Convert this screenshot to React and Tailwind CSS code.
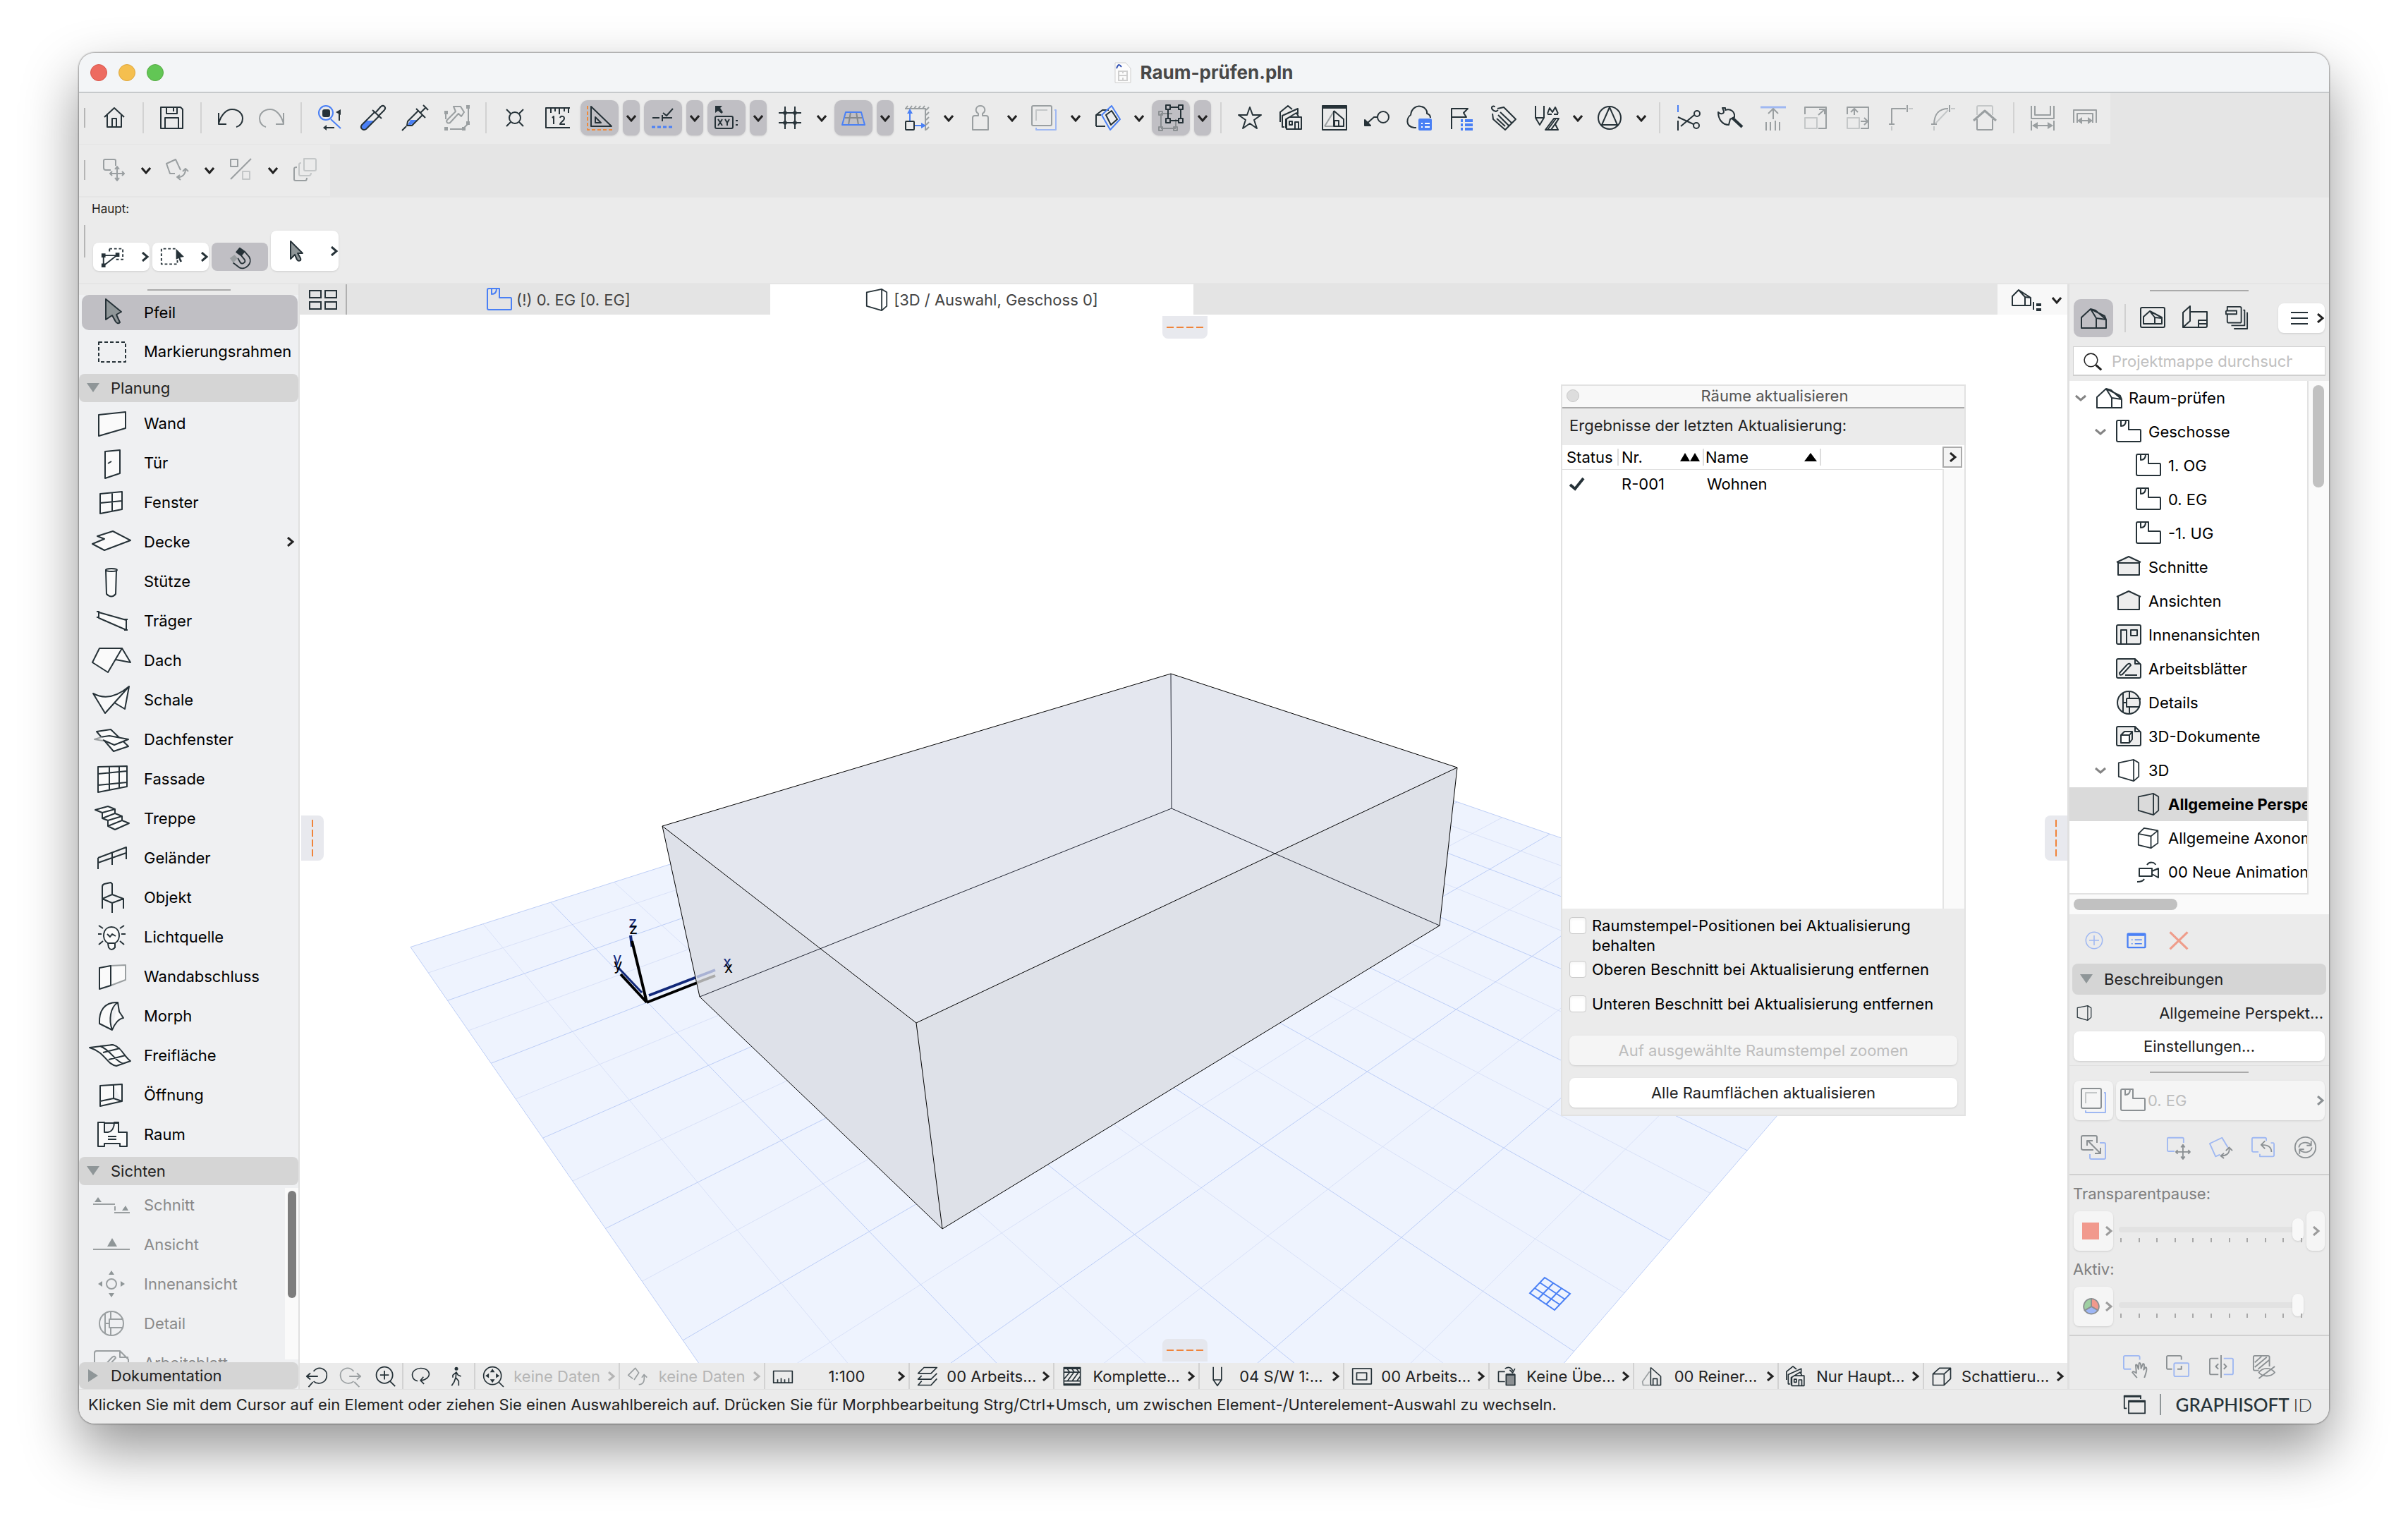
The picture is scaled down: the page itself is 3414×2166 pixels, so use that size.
import { useState } from "react";
import clsx from "clsx";

const INK = "#263238";
const GREY = "#9a9fa1";
const LIGHT = "#c4c7c8";
const BLUE = "#4a80f5";
const SKY = "#9fb8f2";

/* ------------------------------------------------------------------ icons */

// 36 x 36 drawings, stroked with currentColor unless a part says otherwise
const ICONS = {
  home: <path d="M4 17L18 4L32 17M8 14V31H28V14M15 31V19H21V31" />,
  save: (
    <path d="M4 3H30L33 6V33H2V3ZM10 2V12H25V2M20 4V9M8 33V18H27V33" />
  ),
  undo: <path d="M2 11V27H13M2 26C6 12 14 6 21 6C31 6 36 13 36 19C36 25 32 30 27 31" />,
  redo: <path d="M34 11V27H23M34 26C30 12 22 6 15 6C5 6 0 13 0 19C0 25 4 30 9 31" />,
  find: (
    <>
      <circle cx="12" cy="11" r="10" stroke={BLUE} />
      <path d="M19 20L33 33" stroke={BLUE} />
      <rect x="8" y="7" width="9" height="9" rx="2" fill="currentColor" />
      <path d="M31 10V22M12 32H24" />
      <path d="M8 32L13 28V36Z" fill="currentColor" stroke="none" />
      <path d="M26 10L33 6V14Z" fill="currentColor" stroke="none" />
    </>
  ),
  dropper: (
    <>
      <path d="M9 22L20 22L9 34C5 37 0 33 3 29Z" fill={BLUE} stroke="none" />
      <path d="M22 9L3 28C0 32 4 37 9 34L28 15M18 7L31 19M23 10L30 2C34 -1 38 3 35 7L27 15" />
    </>
  ),
  syringe: (
    <>
      <path d="M12 21H21L12 29L7 30Z" fill={BLUE} stroke="none" />
      <path d="M0 36L6 30M7 29L8 23L23 8L29 14L14 29ZM20 5L33 18M26 11L34 3M30 0L37 7" />
    </>
  ),
  marker: (
    <>
      <path d="M13 2H23L28 10L24 16L20 12L8 25C4 27 2 23 4 21L16 9ZM34 5V24M2 12V20M8 34H26M28 32L34 26" />
      <g fill="currentColor" stroke="none">
        <rect x="0" y="8" width="5" height="5" /><rect x="31" y="0" width="5" height="5" />
        <rect x="31" y="23" width="5" height="5" /><rect x="0" y="31" width="5" height="5" />
        <rect x="25" y="31" width="5" height="5" />
      </g>
    </>
  ),
  snap: <><circle cx="18" cy="18" r="8" /><path d="M6 6L12 12M30 6L24 12M6 30L12 24M30 30L24 24" /></>,
  ruler: (
    <>
      <path d="M36 4H2V32H36M9 5V11M15 5V9M21 5V13M28 5V9M34 5V11" />
      <path d="M11 18L13 16V27M22 18C23 15 28 15 28 19C28 22 23 24 22 27H29" />
    </>
  ),
  setsquare: (
    <>
      <path d="M6 2V30H35ZM12 17V25H20Z" />
      <path d="M1 1V35H36" stroke="#ef8a3c" strokeDasharray="5 3" />
    </>
  ),
  guide: (
    <>
      <path d="M3 18H13M17 18H31M17 14V23M18 11L23 15L32 5" />
      <path d="M2 31H33" stroke={BLUE} strokeWidth="3" strokeDasharray="5 3" />
    </>
  ),
  coords: (
    <>
      <path d="M2 1H12L9 4L13 10L11 12L6 8L2 11Z" fill="currentColor" stroke="none" />
      <rect x="2" y="16" width="25" height="17" rx="2" />
      <path d="M6 20L12 29M12 20L6 29M16 20L19 25L22 20M19 25V29M31 22H34M31 28H34" />
    </>
  ),
  grid: (
    <>
      <path d="M11 2V8M11 14V22M11 28V34M25 2V8M25 14V22M25 28V34M2 11H8M14 11H22M28 11H34M2 25H8M14 25H22M28 25H34" />
      <path d="M11 8V14M8 11H14M25 8V14M22 11H28M11 22V28M8 25H14M25 22V28M22 25H28" strokeWidth="3" />
    </>
  ),
  plane: (
    <>
      <path d="M14 10L11 28M22 10L25 28M6 18H30" stroke="#85898c" />
      <path d="M7 10H29L34 28H2Z" stroke={BLUE} />
    </>
  ),
  walls: (
    <>
      <path d="M1 5H30V36M2 5L5 1M8 5L11 1M14 5L17 1M20 5L23 1M26 5L29 1M31 7L35 3M31 14L35 10M31 21L35 17M31 28L35 24M31 35L35 31" stroke={GREY} />
      <path d="M8 22V8M15 29H27" stroke={BLUE} />
      <path d="M8 5L4 12H12ZM31 29L24 25V33Z" fill={BLUE} stroke="none" />
      <rect x="2" y="23" width="12" height="12" rx="1" />
    </>
  ),
  person: <path d="M15 15V12C9 8 12 1 18 1C24 1 27 8 21 12V15H26Q29 15 29 18V35H7V18Q7 15 10 15Z" />,
  sheets: (
    <>
      <rect x="1" y="1" width="28" height="28" rx="2" />
      <path d="M7 22V7H23" stroke={LIGHT} />
      <path d="M33 7H35V35H7V32" stroke={SKY} />
    </>
  ),
  cutplane: (
    <>
      <path d="M2 30V14L11 7H20M2 14H9M2 30H15M16 14L24 8L32 20L23 28Z" />
      <path d="M24 1L36 20L22 35L10 14Z" stroke={BLUE} />
    </>
  ),
  nodes: (
    <>
      <g stroke="#8b8f92">
        <path d="M4 12V31M4 33H25M25 20V31M4 12H20" />
        <rect x="1" y="9" width="5" height="5" /><rect x="1" y="31" width="5" height="5" /><rect x="22" y="31" width="5" height="5" />
      </g>
      <path d="M14 4V22M32 4V22M14 3H32M14 22H32" />
      <g fill="#c0bfc4">
        <rect x="11" y="0" width="6" height="6" /><rect x="29" y="0" width="6" height="6" />
        <rect x="11" y="19" width="6" height="6" /><rect x="29" y="19" width="6" height="6" />
      </g>
    </>
  ),
  star: <path d="M18 3L22 14H34L24 21L28 33L18 26L8 33L12 21L2 14H14Z" />,
  stories: <path d="M7 31H4V15L26 5V13M1 24V10L12 1L18 6M9 33V20L24 11L27 16M10 20L14 17H31V34H10ZM14 23H18V28H14ZM22 33V24H27V33" />,
  viewhouse: (
    <>
      <path d="M4 30L17 9" stroke={GREY} />
      <rect x="1" y="1" width="34" height="34" /><path d="M1 3H35" strokeWidth="4" />
      <path d="M17 8V30H31V20L17 8M18 30V22H24V30" />
      <path d="M4 30H16" stroke={GREY} />
    </>
  ),
  connector: (
    <>
      <circle cx="27" cy="17" r="8" /><path d="M19 17H14L4 26" />
      <path d="M1 29V21L9 29Z" fill="currentColor" />
    </>
  ),
  cloud: (
    <>
      <path d="M14 32H11C-3 30 1 17 6 14C7 5 14 0 21 2C27 3 30 9 29 12C33 13 34 16 34 18" />
      <rect x="17" y="19" width="19" height="17" rx="2" fill={BLUE} stroke="none" />
      <path d="M21 26H23M21 31H23M26 26H33M26 31H33" stroke="#fff" />
    </>
  ),
  flags: (
    <>
      <path d="M4 34V5H27L21 11L25 17H4" />
      <path d="M17 22H20M17 28H20M17 34H20M23 22H34M23 28H34M23 34H34" stroke={BLUE} strokeWidth="4" />
    </>
  ),
  tag: <path d="M10 7L7 9C4 8 0 7 1 3C2 1 5 1 5 3M9 5L18 3L35 20L20 35L3 20L2 12M13 10L30 26M10 14L25 29M8 19L20 30" />,
  pens: (
    <>
      <path d="M3 1V18H15V1M3 18L9 28L15 18M20 12L23 4L27 10L31 3L35 12M20 13H26M29 13H35" />
      <path d="M17 35L29 19H36L31 27L35 35ZM20 35L32 19M25 35L34 22" />
    </>
  ),
  compass: <><circle cx="18" cy="18" r="16" /><path d="M18 3L7 28H29Z" /></>,
  scissors: (
    <>
      <path d="M3 0V10" stroke={BLUE} />
      <path d="M3 22V36M3 17L25 27M7 30L26 14" />
      <circle cx="30" cy="12" r="4" /><circle cx="29" cy="29" r="4" />
    </>
  ),
  axe: <><path d="M0 10C4 14 8 12 8 9L6 4H10V7C18 4 24 10 23 17L17 20L15 28C6 28 0 20 0 10Z" /><path d="M20 18L34 31" strokeWidth="4" /></>,
  lift: <><path d="M0 3H36" stroke={SKY} strokeWidth="3" /><path d="M18 20V5M11 12L18 5L25 12M8 24V36M14 24V36M21 22V36M27 24V36" /></>,
  resize: <><path d="M3 13V3H33V33H22M22 14L31 6M23 6H31V13" /><path d="M3 18H20V33H3Z" stroke={LIGHT} /></>,
  stretch: <><path d="M3 13V3H33V33H22M13 14V6M8 10L13 5L18 10M22 23H32M27 18L32 23L27 28" /><path d="M3 18H20V33H3Z" stroke={LIGHT} /></>,
  corner: <><path d="M6 28V5H26M28 0V10M2 27H10" /><path d="M6 30V36M30 5H36" stroke={LIGHT} /></>,
  arc: <><path d="M6 28C6 12 14 5 26 5M28 0V10M2 27H10" /><path d="M6 30V36M30 5H36M8 26L26 7" stroke={LIGHT} /></>,
  roofup: <><path d="M7 14V3Q7 1 9 1H27Q29 1 29 3V14" stroke={LIGHT} /><path d="M7 20V34Q7 35 9 35H27Q29 35 29 34V20" /><path d="M2 22L18 8L34 22" strokeWidth="3" /></>,
  channel: <><path d="M2 1V19H34V1M7 1V14H29V1M2 22V36M34 22V36M4 29H32" /><path d="M3 29L11 24V34ZM33 29L25 24V34Z" fill="currentColor" stroke="none" /></>,
  bracket: <><path d="M2 25V7H34V25M7 25V12H29V25M9 22H27" /><path d="M7 22L14 17V27ZM29 22L22 17V27Z" fill="currentColor" stroke="none" /></>,
  move: <path d="M13 18H6Q3 18 3 15V5Q3 3 5 3H18Q20 3 20 5V12M22 14V32M12 23H32M19 17L22 13L25 17M19 29L22 33L25 29M15 20L12 23L15 26M29 20L32 23L29 26" />,
  rotate: <path d="M14 23H7L2 9L15 3L22 18M18 28C24 29 29 24 29 17M25 20L29 16L33 20M21 25L17 28L22 32" />,
  ratio: <><path d="M3 3H13V13H3ZM32 2L3 31" /><path d="M20 20H30V31H20Z" stroke={LIGHT} /></>,
  copies: <><path d="M7 14Q3 14 3 16V31Q3 33 5 33H19Q21 33 21 29" /><path d="M13 8Q10 8 10 10V24Q10 26 12 26H24Q27 26 27 22M17 2H32Q34 2 34 4V17Q34 19 32 19H19Q17 19 17 17Z" stroke={LIGHT} /></>,
  marquee: (
    <>
      <path d="M14 6H34V22H24M14 6V12" strokeDasharray="4 3" />
      <path d="M5 16H26M5 18V31M7 30L26 15" />
      <path d="M2 13H8V19H2ZM2 28H8V34H2ZM23 12H29V18H23Z" fill="currentColor" stroke="none" />
    </>
  ),
  select: <><path d="M24 6H3V29H27V22" strokeDasharray="4 3" /><path d="M25 6L37 18L31 19L34 25L31 26L29 20L25 22Z" fill="currentColor" stroke="none" /></>,
  magnet: (
    <>
      <path d="M25 10L32 18C38 28 26 39 17 34L8 27M20 16L25 22C28 26 22 30 19 27L15 20" />
      <path d="M13 11L18 5L25 10L20 16Z" fill="currentColor" />
      <path d="M3 20L10 15L15 20L8 27Z" fill={GREY} stroke="none" />
    </>
  ),
  arrow: <path d="M12 4V29L18 23L21 30Q23 33 26 31Q27 29 25 26L22 21H29Z" fill="#8f9698" />,
  file3d: <path d="M2 6L26 1V35L2 28ZM26 1L34 6V28L26 35" />,
  plan: <path d="M3 2H18V15H34Q35 15 35 17V31Q35 32 33 32H3Q1 32 1 30V4Q1 2 3 2ZM7 2V10C12 10 14 7 14 2" />,
  house: <path d="M1 32V17L14 5L34 15L36 20V32ZM14 5L22 18V32M22 18L36 20M14 5L21 7L36 20" />,
  houselist: <><path d="M1 26V13L10 4L27 15V26ZM10 4L19 14V26M19 14L27 15" /><path d="M31 21V32" /><path d="M35 25H42M35 32H42" strokeWidth="4" /></>,
  viewmap: <><rect x="1" y="3" width="34" height="28" rx="2" /><path d="M5 26V16L14 8L31 17V26ZM14 8L21 17V26M21 17L31 18" /></>,
  layout: <path d="M1 31V10L11 1V22L1 31H33Q35 31 35 29V9H12M23 31V21H35M23 26H35" />,
  publisher: <path d="M4 7V2H23Q25 2 25 4V24Q25 26 23 26H7Q4 26 4 24V12M2 8H18V13H2V8M28 7H30V30H10M33 11H34V35H14" />,
  schnitt: <path d="M1 11L18 3L35 11M3 12V29H33V12ZM3 12H33" fill="#ededed" />,
  ansicht: <path d="M1 12L18 4L35 12M3 12V30H33V12" fill="#ededed" />,
  innen: <><rect x="1" y="4" width="34" height="27" rx="2" fill="#ededed" /><path d="M7 31V11H15V31M21 11H30V19H21Z" /></>,
  blatt: <path d="M27 4H3Q1 4 1 6V29Q1 31 3 31H33Q35 31 35 29V12L27 4V11H35M5 24L16 12Q20 9 21 13L9 26Q5 28 5 24ZM13 27H30" fill="#ededed" />,
  detail: <><circle cx="18" cy="18" r="16" fill="#ededed" /><path d="M10 4V32M19 2V12M19 24V34M15 12H34V14M34 24H15V12M10 18H15" /></>,
  doc3d: <path d="M27 4H3Q1 4 1 6V29Q1 31 3 31H33Q35 31 35 29V12L27 4V11H35M7 16H19V27H7ZM7 16L12 11H23L19 16M19 27L23 22V11" fill="#ededed" />,
  axono: <path d="M2 11L22 15V34L2 29ZM2 11L11 2L33 6L22 15M33 6V26L22 34" />,
  camera: <path d="M5 13H23V24H5ZM23 17L32 13V26L23 21M16 8C19 3 27 4 28 8M2 32C8 32 11 30 12 28" />,
  search: <><circle cx="16" cy="16" r="12" /><path d="M25 25L35 34" strokeWidth="4" /></>,
  add: <><circle cx="18" cy="18" r="15" /><path d="M18 9V27M9 18H27" /></>,
  props: <><rect x="2" y="6" width="32" height="25" rx="1" strokeWidth="3" /><path d="M3 8H33" strokeWidth="4" /><path d="M9 17H11M9 24H11M15 17H28M15 24H28" /></>,
  cross: <path d="M2 3L34 34M34 3L2 34" strokeWidth="4" />,
  swap: <><path d="M18 22H4Q1 22 1 20V4Q1 2 3 2H21Q23 2 23 4V12M10 9L27 26M9 16V9H17M28 19V27H20" /><path d="M27 12H33Q35 12 35 14V33Q35 35 33 35H15Q13 35 13 33V28" stroke={SKY} /></>,
  tmove: <><path d="M12 24H3Q1 24 1 22V4Q1 3 3 3H24Q26 3 26 5V11" stroke={SKY} /><path d="M25 15V35M14 25H36M22 18L25 14L28 18M22 32L25 36L28 32M17 22L14 25L17 28M33 22L36 25L33 28" /></>,
  trotate: <><path d="M17 29L10 32L1 12L20 3L29 18" stroke={SKY} /><path d="M19 31C27 31 32 27 31 20M26 23L31 18L36 23M23 27L18 31L23 35" /></>,
  treset: <><path d="M11 25H3Q1 25 1 23V5Q1 3 3 3H21Q23 3 23 5V8M30 11H34Q35 11 35 13V30Q35 32 33 32H13V28" stroke={SKY} /><path d="M31 25C31 18 26 14 16 14M21 8L15 14L21 20" /></>,
  refresh: <><circle cx="18" cy="18" r="16" /><path d="M8 18C9 10 20 8 27 14M27 8V15H20M28 18C27 26 16 28 9 22M9 28V21H16" /></>,
  hand: <><path d="M12 22H3Q1 22 1 20V4Q1 2 3 2H23Q25 2 25 4V8" stroke={SKY} /><path d="M21 35L14 27Q15 24 20 28L19 16Q21 13 23 22L24 13Q27 11 27 21L30 14Q33 13 31 23L34 19Q37 20 34 29L32 35" /></>,
  overlap: <><path d="M9 22H3Q1 22 1 20V4Q1 2 3 2H21Q23 2 23 4V8M23 17V22H17" /><rect x="12" y="13" width="22" height="20" rx="2" stroke={SKY} /></>,
  mirror: <><path d="M14 6H3Q1 6 1 8V28Q1 30 3 30H14M18 1V35M14 14L10 18L14 22M22 14L26 18L22 22" /><path d="M22 6H34Q36 6 36 8V28Q36 30 34 30H22" stroke={SKY} /></>,
  hatch: <path d="M26 18V4Q26 2 24 2H4Q2 2 2 4V22Q2 24 4 24H10M4 12L14 3M4 19L22 4M9 22L26 8M10 27C16 19 28 19 34 27C28 34 16 34 10 27ZM34 18L10 36" />,
  windows: <><path d="M6 24H2V4H28V9M9 12H35V32H9Z" /><path d="M1 5H29M9 13H35" strokeWidth="3" /></>,
  zoomback: <><path d="M13 10C22 0 36 7 34 18C33 29 20 32 13 26M12 27L5 35" /><path d="M20 18H2M8 13L2 18L8 23" /></>,
  zoomnext: <><path d="M23 10C14 0 0 7 2 18C3 29 16 32 23 26M24 27L32 35" /><path d="M16 18H34M28 13L34 18L28 23" /></>,
  zoomin: <><circle cx="17" cy="16" r="13" /><path d="M26 26L34 34M17 9V23M10 16H24" /></>,
  orbit: <path d="M12 26C2 24 0 12 8 7C15 2 28 4 31 11C34 18 27 24 18 25M22 19L17 25L23 31" />,
  walk: <><circle cx="18" cy="5" r="3" fill="currentColor" stroke="none" /><path d="M18 10L17 20L22 26V34M17 20L14 28L10 34M18 11L12 16V20M18 11L21 16L26 18" /></>,
  zoomfit: (
    <>
      <circle cx="17" cy="17" r="15" /><path d="M28 28L36 36" />
      <path d="M17 5L21 11H13ZM17 29L13 23H21ZM5 17L11 13V21ZM29 17L23 21V13Z" fill="currentColor" stroke="none" />
    </>
  ),
  angle: <path d="M10 22L2 16L14 4L20 12L12 24M20 32C28 32 30 26 29 16M25 20L29 15L34 20" />,
  scale: <path d="M2 9H34V29H2ZM9 29V23M15 29V21M21 29V23M28 29V21" />,
  layers: <path d="M12 3H34L24 13H2ZM8 17L2 23H24L34 13M8 26L2 33H24L34 22" />,
  pattern: <path d="M4 3H32V33H4ZM4 5H32M4 11H32M4 26H32M4 31H32M4 23L14 11M10 26L21 11M18 26L29 11M26 26L32 18M8 3L14 11M16 3L22 11M24 3L30 11" />,
  pen: <path d="M11 2V24L18 34L25 24V2M11 24H25" />,
  frame: <><rect x="2" y="5" width="32" height="26" /><rect x="9" y="12" width="17" height="12" /></>,
  override: <><path d="M14 27H3V10H14M14 5C20 1 26 3 27 9M22 7L27 12L31 5" /><rect x="16" y="15" width="15" height="18" fill="#8b8f92" /><path d="M16 15H31" strokeWidth="3" /></>,
  reno: <><path d="M14 33H3L2 27L14 10" stroke={GREY} /><path d="M16 3V33H33V18L16 3M20 33V22H27V33" /></>,
  cube: <path d="M3 14H22V33H3ZM3 14L14 4H33L22 14M22 33L33 22V4" />,
};

// 60 x 40 drawings for the toolbox
const TOOLS = {
  Pfeil: <path d="M22 2V31L31 25L36 34Q39 38 42 35L37 24L44 20Z" fill="#8f9698" transform="translate(0 -1)" />,
  Markierungsrahmen: <path d="M12 7H50V35H12Z" fill="none" strokeDasharray="5 3" />,
  Wand: <path d="M12 8L50 4V27L12 38Z" />,
  Tür: <path d="M21 4L42 2V35L21 42ZM25 21L30 18" />,
  Fenster: <path d="M14 8L45 5V30L14 36ZM31 6V33M14 21L45 18" />,
  Decke: <path d="M3 23L20 32L57 18L32 5L10 12L20 16Z" />,
  Stütze: <><path d="M22 4L23 38Q30 45 36 38L37 4Z" /><ellipse cx="30" cy="4" rx="8" ry="2" /></>,
  Träger: <path d="M12 8L51 19V33L12 16ZM9 7H13M9 15H13M48 18H53M48 33H53" />,
  Dach: <path d="M3 23L13 3H45L25 37ZM45 3L57 23L36 19" />,
  Schale: <path d="M4 11Q28 24 55 1L21 39ZM55 1L49 33L34 24" />,
  Dachfenster: <><path d="M9 9L29 6L54 30L33 37Z" /><path d="M14 17L27 15L54 20L34 28L18 21" /><path d="M16 17L6 20L18 22" stroke={GREY} /></>,
  Fassade: <path d="M11 3L52 2V31L11 39ZM27 3V36M41 2V33M11 13L52 9M11 29L52 25" />,
  Treppe: <path d="M7 8L25 3L35 7V13L45 17V23L55 27L35 36L25 31V23L17 20V12ZM17 12L35 7M17 20L35 13M25 23L45 17M25 31L45 23" />,
  Geländer: <path d="M11 20L51 5V22M11 20V36M31 12V30M11 27L51 13" fill="none" />,
  Objekt: <path d="M17 36V5Q17 2 20 1L29 -1L31 1V16L17 22L31 28L47 22L31 16M31 28V42M47 22V36" fill="none" />,
  Lichtquelle: <path d="M25 29C15 23 18 6 30 6C42 6 45 23 35 29V35Q30 41 26 35ZM25 29H35M24 16L28 20L31 16L36 19M12 4L18 8M48 4L42 8M11 16H16M44 16H50M12 31L18 26M48 31L42 26" />,
  Wandabschluss: <><path d="M29 5L50 4V25L29 33" stroke={GREY} /><path d="M13 8L29 5V33L13 38Z" /></>,
  Morph: <path d="M13 31C12 13 20 0 39 1L41 14L47 23C40 24 34 32 31 40ZM39 1C28 8 26 26 31 40" />,
  Freifläche: <path d="M-1 9L32 5C44 8 48 22 57 28L37 35C22 32 22 16 -1 9ZM14 7C30 13 34 28 47 32M18 16L42 10M26 26L50 20M32 5C24 6 22 6 14 7" />,
  Öffnung: <path d="M14 7L45 5V29L14 36ZM33 6V25L45 29M14 29L33 25" />,
  Raum: <path d="M13 3H20V17H25C31 16 34 10 34 3H40V17H52V37H42V33H20V37H11V3ZM20 4H40M25 23H37M25 27H37" />,
  Schnitt: <><path d="M4 19H35M34 31H56M35 22V28" /><path d="M6 16L11 9L16 16ZM45 28L50 21L54 28Z" fill="currentColor" stroke="none" /></>,
  Ansicht: <><path d="M4 27H56" /><path d="M24 23L31 11L38 23Z" fill="currentColor" stroke="none" /></>,
  Innenansicht: <><circle cx="30" cy="20" r="7" /><path d="M26 7H34L30 1ZM26 33H34L30 39ZM17 16V24L11 20ZM43 16V24L49 20Z" fill="currentColor" stroke="none" /></>,
  Detail: <><circle cx="30" cy="20" r="17" /><path d="M21 5V35M29 3V14M29 26V37M47 14H27V26H47M21 20H27" /></>,
  Arbeitsblatt: <path d="M42 3H9Q6 3 6 6V34H54V15L42 3V12H54M20 24L31 12Q35 9 36 13L24 26" />,
};

function Icon({ name, size = "size-9", className = "" }) {
  return (
    <svg viewBox="0 0 36 36" fill="none" stroke="currentColor" strokeWidth="2" strokeLinejoin="round" className={clsx("shrink-0 overflow-visible", size, className)} aria-hidden="true">
      {ICONS[name]}
    </svg>
  );
}

function Chevron({ dir = "right", className = "" }) {
  return (
    <svg viewBox="0 0 14 14" fill="none" stroke="currentColor" strokeWidth="3" className={clsx("size-[14px] shrink-0", className)} aria-hidden="true">
      <path d={dir === "right" ? "M4 1L11 7L4 13" : "M1 4L7 11L13 4"} />
    </svg>
  );
}

/* ---------------------------------------------------------------- toolbars */

// [icon, flags]: a = active, m = has menu, d = disabled; "|" is a divider
const MAIN_TOOLBAR = [
  ["home"], "|", ["save"], "|", ["undo"], ["redo", "d"], "|",
  ["find"], ["dropper"], ["syringe"], ["marker", "d"], "|",
  ["snap"], ["ruler"], ["setsquare", "am"], ["guide", "am"], ["coords", "am"],
  ["grid", "m"], ["plane", "am"], ["walls", "m"], ["person", "dm"], ["sheets", "dm"],
  ["cutplane", "m"], ["nodes", "am"], "|",
  ["star"], ["stories"], ["viewhouse"], ["connector"], ["cloud"], ["flags"], ["tag"],
  ["pens", "m"], ["compass", "m"], "|",
  ["scissors"], ["axe"], ["lift", "d"], ["resize", "d"], ["stretch", "d"],
  ["corner", "d"], ["arc", "d"], ["roofup", "d"], "|", ["channel", "d"], ["bracket", "d"],
];

const EDIT_TOOLBAR = [["move", "dm"], ["rotate", "dm"], ["ratio", "dm"], ["copies", "d"]];

function Toolbar({ items }) {
  return (
    <div className="flex h-full items-center bg-[#ebebeb] pr-1.5 pb-0.5">
      <div className="flex w-5 justify-center">
        <div className="mr-1 h-7 w-0.5 bg-[#b5b5b5]" />
      </div>
      {items.map((item, i) => {
        if (item === "|") {
          return (
            <div key={i} className="flex w-[22px] justify-center">
              <div className="h-11 w-0.5 bg-[#d2d2d2]" />
            </div>
          );
        }
        const [name, flags = ""] = item;
        const active = flags.includes("a");
        return (
          <div key={i} className="flex">
            <button
              type="button"
              aria-label={name}
              className={clsx(
                "mx-[3px] flex h-[50px] w-[54px] items-center justify-center rounded-[10px]",
                active && "bg-[#c0bfc4] shadow-sm",
                flags.includes("d") ? "text-[#9a9fa1]" : "text-[#263238]"
              )}
            >
              <Icon name={name} />
            </button>
            {flags.includes("m") && (
              <button
                type="button"
                aria-label={`${name} menu`}
                className={clsx("mx-[3px] flex h-[50px] w-6 items-center justify-center rounded-lg text-[#222]", active && "bg-[#c0bfc4] shadow-sm")}
              >
                <Chevron dir="down" />
              </button>
            )}
          </div>
        );
      })}
    </div>
  );
}

function InfoBox() {
  return (
    <div className="flex h-[121px] flex-col bg-[#ebebeb] text-[#222]">
      <div className="pt-1 pl-[18px] text-[17px] leading-6">Haupt:</div>
      <div className="flex items-start pt-[19px]">
        <div className="mr-[11px] ml-[7px] -mt-2 h-[46px] w-0.5 bg-[#b5b5b5]" />
        <div className="flex items-end gap-1">
          {["marquee", "select"].map((name) => (
            <button key={name} type="button" aria-label={name} className="flex h-10 w-20 items-center justify-between rounded-lg bg-white pl-2.5 text-[#263238] shadow">
              <Icon name={name} size="size-[34px]" />
              <Chevron />
            </button>
          ))}
          <button type="button" aria-label="magnet" className="flex h-10 w-20 items-center justify-center rounded-lg bg-[#c0bfc4] text-[#263238]">
            <Icon name="magnet" size="size-[34px]" />
          </button>
          <button type="button" aria-label="arrow" className="flex h-[57px] w-24 items-center justify-between rounded-lg bg-white pl-4 text-[#263238] shadow">
            <Icon name="arrow" />
            <Chevron />
          </button>
        </div>
      </div>
    </div>
  );
}

/* ----------------------------------------------------------------- toolbox */

const PLANUNG = [
  "Wand", "Tür", "Fenster", "Decke", "Stütze", "Träger", "Dach", "Schale", "Dachfenster", "Fassade",
  "Treppe", "Geländer", "Objekt", "Lichtquelle", "Wandabschluss", "Morph", "Freifläche", "Öffnung", "Raum",
];
const SICHTEN = ["Schnitt", "Ansicht", "Innenansicht", "Detail", "Arbeitsblatt"];

function Tool({ name, active, muted, onClick }) {
  return (
    <button
      type="button"
      onClick={onClick}
      className={clsx(
        "flex w-full shrink-0 items-center text-left",
        active ? "mb-0.5 h-[50px] rounded-[10px] bg-[#c0bfc4]" : "h-14",
        muted ? "text-[#8a8a8a]" : "text-black"
      )}
    >
      <svg
        viewBox="0 0 60 40"
        fill={muted ? "none" : "#fafafa"}
        stroke={muted ? GREY : INK}
        strokeWidth="2"
        strokeLinejoin="round"
        className={clsx("mr-4 ml-3 h-10 w-[60px] shrink-0 overflow-visible", muted && "text-[#8f9698]")}
        aria-hidden="true"
      >
        {TOOLS[name]}
      </svg>
      <span className="flex-1">{name}</span>
      {name === "Decke" && <Chevron className="mr-1 text-[#222]" />}
    </button>
  );
}

function Section({ title, open = true, className = "" }) {
  return (
    <button type="button" className={clsx("flex shrink-0 items-center gap-4 rounded-lg bg-[#d5d5d5] pl-[11px] text-left text-[#222]", className)}>
      <svg viewBox="0 0 18 18" className="size-[18px]" aria-hidden="true">
        <path d={open ? "M0 2H18L9 15Z" : "M2 0L16 9L2 18Z"} fill="#8f9698" />
      </svg>
      {title}
    </button>
  );
}

function Toolbox() {
  const [tool, setTool] = useState("Pfeil");
  return (
    <nav className="flex w-[313px] shrink-0 flex-col border-r-2 border-[#e0e0e0] bg-[#eff0f2]">
      <div className="flex h-[15px] shrink-0 items-center justify-center bg-[#ebebeb]">
        <div className="h-0.5 w-[118px] bg-[#aaa]" />
      </div>
      <div className="pr-px pl-1">
        <Tool name="Pfeil" active={tool === "Pfeil"} onClick={() => setTool("Pfeil")} />
        <Tool name="Markierungsrahmen" onClick={() => setTool("Markierungsrahmen")} />
      </div>
      <Section title="Planung" className="mt-1 h-10" />
      <div className="pt-0.5 pr-px pl-1">
        {PLANUNG.map((name) => (
          <Tool key={name} name={name} onClick={() => setTool(name)} />
        ))}
      </div>
      <Section title="Sichten" className="mt-1 h-10" />
      <div className="flex min-h-0 flex-1">
        <div className="min-w-0 flex-1 overflow-hidden px-1">
          {SICHTEN.map((name) => (
            <Tool key={name} name={name} muted />
          ))}
        </div>
        <div className="my-1 w-[19px] bg-[#fafafa] pt-1 pl-1">
          <div className="h-[152px] w-3 rounded-full bg-[#7d7d7d]" />
        </div>
      </div>
      <Section title="Dokumentation" open={false} className="h-[38px]" />
    </nav>
  );
}

/* ------------------------------------------------------------------ canvas */

// Ground plane to screen: 16 x 16 cells seen in perspective
function project(u, v) {
  const d = 1 + 0.03606 * u - 0.03705 * v;
  return [(582 + 127.6 * u + 2.75 * v) / d, (1342.5 + 14.4 * u - 14.65 * v) / d];
}

function segment(a, b) {
  return `M${project(...a).join(" ")}L${project(...b).join(" ")}`;
}

function gridPath(odd) {
  const parts = [];
  for (let i = odd ? 1 : 0; i <= 16; i += 2) {
    parts.push(segment([i, 0], [i, 16]), segment([0, i], [16, i]));
  }
  return parts.join("");
}

function Scene() {
  const corners = [[0, 0], [16, 0], [16, 16], [0, 16]];
  return (
    <svg viewBox="425 446 2506 1486" preserveAspectRatio="xMidYMid slice" className="block h-full w-full" role="img" aria-label="3D">
      <polygon points={corners.map(([u, v]) => project(u, v).join(",")).join(" ")} fill="#eef3fe" />
      <path d={gridPath(true)} stroke="#d9e1f8" strokeWidth="1" />
      <path d={gridPath(false)} stroke="#bccdf6" strokeWidth="1" />

      <g stroke="#12297a" strokeWidth="4" fill="none">
        <path d="M920 1411L1014 1375M896 1342L894 1326" />
        <path d="M910 1407L876 1371" strokeWidth="3" />
        <path d="M917 1421L1014 1383M917 1421L880 1381M917 1421L896 1334" stroke="#000" />
      </g>
      <polygon points="939,1171 1299,1450 1336,1742 992,1413" fill="#dee1e9" />
      <polygon points="1299,1450 2066,1088 2041,1312 1336,1742" fill="#dee1e8" />
      <polygon points="939,1171 1660,955 2066,1088 1299,1450" fill="#e4e7ef" />
      <g stroke="#222633" strokeWidth="1" fill="none">
        <path d="M992 1413L1661 1146L2041 1312M1661 1146L1660 955" />
        <path d="M939 1171L1660 955L2066 1088L1299 1450ZM939 1171L992 1413L1336 1742L2041 1312L2066 1088M1299 1450L1336 1742" stroke="#000" />
      </g>
      <path d="M988 1385L1014 1375" stroke="#a9b2d4" strokeWidth="4" />
      <path d="M988 1393L1014 1383" stroke="#aaa" strokeWidth="4" />

      <g fontSize="22" fontFamily="Inter, sans-serif" fill="#12297a">
        <text x="891" y="1315">z</text>
        <text x="869" y="1366">y</text>
        <text x="1025" y="1371">x</text>
        <g fill="#000">
          <text x="892" y="1324">z</text>
          <text x="870" y="1375">y</text>
          <text x="1027" y="1379">x</text>
        </g>
      </g>

      <path
        d="M2190 1811L2226 1834L2204 1857L2169 1833ZM2183 1818L2219 1842M2176 1826L2211 1849M2202 1819L2181 1841M2214 1826L2192 1849"
        stroke={BLUE} strokeWidth="2" fill="none"
      />
    </svg>
  );
}

function PaneHandle({ vertical, className }) {
  return (
    <div className={clsx("absolute flex items-center justify-center gap-1 bg-[#e2e4ea]/80", vertical ? "h-16 w-8 flex-col" : "h-8 w-16", className)}>
      {[0, 1, 2, 3].map((i) => (
        <span key={i} className={clsx("bg-[#f0843a]", vertical ? "h-2.5 w-0.5" : "h-0.5 w-2.5")} />
      ))}
    </div>
  );
}

/* ------------------------------------------------------------ room palette */

const CHECKS = [
  "Raumstempel-Positionen bei Aktualisierung behalten",
  "Oberen Beschnitt bei Aktualisierung entfernen",
  "Unteren Beschnitt bei Aktualisierung entfernen",
];

function SortMark({ wide }) {
  return (
    <svg viewBox="0 0 18 12" preserveAspectRatio="none" className={clsx("h-3", wide ? "w-[18px]" : "w-[14px]")} aria-hidden="true">
      <path d="M0 12L9 0L18 12Z" />
    </svg>
  );
}

function RoomPalette() {
  return (
    <section className="absolute top-[99px] right-[144px] flex h-[1037px] w-[574px] flex-col border-2 border-[#e2e2e2] bg-[#ebebeb]">
      <header className="relative flex h-8 shrink-0 items-center justify-center border-b-2 border-[#aaa] bg-[#f8f8f8] pb-0.5 pl-8 text-[#555]">
        <button type="button" aria-label="Schließen" className="absolute left-1.5 size-[18px] rounded-full border border-[#c8c8c8] bg-[#ddd]" />
        Räume aktualisieren
      </header>
      <p className="flex h-[52px] shrink-0 items-center pb-1 pl-2.5 text-[#222]">Ergebnisse der letzten Aktualisierung:</p>
      <div className="flex min-h-0 flex-1 bg-white">
        <div className="min-w-0 flex-1">
          <table className="w-full table-fixed border-collapse text-left text-black">
            <thead>
              <tr className="h-[34px] border-b border-[#e0e0e0]">
                <th className="w-[78px] pl-1.5 font-normal">Status</th>
                <th className="w-[121px] font-normal">
                  <div className="flex items-center justify-between border-l-2 border-[#ddd] pr-1 pl-1 leading-6">
                    Nr.
                    <span className="flex"><SortMark /><SortMark /></span>
                  </div>
                </th>
                <th className="w-[168px] font-normal">
                  <div className="flex items-center justify-between border-x-2 border-[#ddd] pr-1 pl-0.5 leading-6">
                    Name
                    <SortMark wide />
                  </div>
                </th>
                <th aria-label="Rest" />
              </tr>
            </thead>
            <tbody>
              <tr className="h-[42px]">
                <td className="pl-2.5">
                  <svg viewBox="0 0 22 22" className="size-[22px]" fill="none" stroke={INK} strokeWidth="4" aria-hidden="true">
                    <path d="M1 12L8 18L20 3" />
                  </svg>
                </td>
                <td className="pl-1.5">R-001</td>
                <td className="pl-1.5">Wohnen</td>
                <td />
              </tr>
            </tbody>
          </table>
        </div>
        <div className="flex w-[31px] shrink-0 flex-col">
          <button type="button" aria-label="Spalten" className="mt-0.5 flex h-[30px] w-[28px] items-center justify-center border-2 border-[#aaa] bg-[#f4f4f4]">
            <Chevron className="text-[#222]" />
          </button>
          <div className="mt-0.5 flex-1 border-l-2 border-[#e4e4e4] bg-[#fafafa]" />
        </div>
      </div>
      <div className="shrink-0 pt-2.5 pb-2.5 text-black">
        {CHECKS.map((label, i) => (
          <label key={label} className={clsx("flex items-start gap-2 pl-2.5 leading-7", i === 0 ? "h-[62px]" : "h-[49px]")}>
            <input type="checkbox" className="mt-0.5 size-6 shrink-0 appearance-none rounded border border-[#c9c9c9] bg-white shadow-inner" />
            {label}
          </label>
        ))}
        <div className="mt-2.5 flex flex-col gap-[18px] px-2.5">
          <button type="button" disabled className="h-[42px] rounded-lg bg-[#f5f5f5] text-[#bdbdbd] shadow-sm">Auf ausgewählte Raumstempel zoomen</button>
          <button type="button" className="h-[42px] rounded-lg bg-white text-[#222] shadow">Alle Raumflächen aktualisieren</button>
        </div>
      </div>
    </section>
  );
}

/* ----------------------------------------------------------- quick options */

const QUICK = [
  ["zoomfit", "keine Daten", true],
  ["angle", "keine Daten", true],
  ["scale", "1:100"],
  ["layers", "00 Arbeits..."],
  ["pattern", "Komplette..."],
  ["pen", "04 S/W 1:..."],
  ["frame", "00 Arbeits..."],
  ["override", "Keine Übe..."],
  ["reno", "00 Reiner..."],
  ["stories", "Nur Haupt..."],
  ["cube", "Schattieru..."],
];

function QuickOptions() {
  return (
    <div className="flex h-[37px] shrink-0 items-center bg-[#ebebeb] text-[#222]">
      <div className="flex h-full w-[145px] items-center justify-around text-[#263238]">
        <Icon name="zoomback" size="size-8" />
        <Icon name="zoomnext" size="size-8" className="text-[#9a9fa1]" />
        <Icon name="zoomin" size="size-8" />
      </div>
      <div className="flex h-full w-[102px] items-center justify-around border-l-2 border-[#d2d2d2] text-[#263238]">
        <Icon name="orbit" size="size-[30px]" />
        <Icon name="walk" size="size-[30px]" />
      </div>
      {QUICK.map(([icon, text, muted], i) => (
        <button
          key={i}
          type="button"
          className={clsx("flex h-full min-w-0 flex-1 items-center border-l-2 border-[#d2d2d2] pr-1 pl-2.5", muted && "text-[#b5b5b5]")}
        >
          <Icon name={icon} size="size-[30px]" className={muted && i > 0 ? "text-[#9a9fa1]" : "text-[#263238]"} />
          <span className="flex-1 pl-1.5 text-center whitespace-nowrap">{text}</span>
          <Chevron />
        </button>
      ))}
    </div>
  );
}

function Viewport() {
  return (
    <main className="flex min-w-0 flex-1 flex-col">
      <div className="flex h-[43px] shrink-0 items-stretch bg-[#e4e4e4] text-[#444]">
        <button type="button" aria-label="Übersicht" className="flex w-[67px] items-center justify-center border-r-2 border-[#b0b0b0]">
          <svg viewBox="0 0 40 28" className="h-7 w-10" fill="none" stroke={INK} strokeWidth="2" aria-hidden="true">
            <path d="M1 1H17V11H1ZM23 1H39V11H23ZM1 17H17V27H1ZM23 17H39V27H23Z" />
          </svg>
        </button>
        <button type="button" className="flex w-[600px] items-center justify-center gap-1.5">
          <Icon name="plan" className="text-[#4a80f5]" />
          (!) 0. EG [0. EG]
        </button>
        <button type="button" className="flex w-[600px] items-center justify-center gap-2 bg-white">
          <Icon name="file3d" size="size-8" className="text-[#263238]" />
          [3D / Auswahl, Geschoss 0]
        </button>
        <div className="flex-1" />
        <button type="button" aria-label="Ansichten" className="flex w-[99px] items-center justify-between bg-[#f8f8f8] pr-2 pl-5">
          <Icon name="houselist" className="text-[#263238]" />
          <Chevron dir="down" className="text-[#222]" />
        </button>
      </div>
      <div className="relative min-h-0 flex-1 overflow-hidden bg-white">
        <Scene />
        <PaneHandle className="top-0.5 left-1/2 -ml-[30px] rounded-b-lg" />
        <PaneHandle className="bottom-0.5 left-1/2 -ml-[30px] rounded-t-lg" />
        <PaneHandle vertical className="top-[710px] left-0.5 rounded-r-lg" />
        <PaneHandle vertical className="top-[710px] right-0 rounded-l-lg" />
        <RoomPalette />
      </div>
      <QuickOptions />
    </main>
  );
}

/* --------------------------------------------------------------- navigator */

const TREE = [
  { label: "Raum-prüfen", icon: "house", level: 0, open: true },
  { label: "Geschosse", icon: "plan", level: 1, open: true },
  { label: "1. OG", icon: "plan", level: 2 },
  { label: "0. EG", icon: "plan", level: 2 },
  { label: "-1. UG", icon: "plan", level: 2 },
  { label: "Schnitte", icon: "schnitt", level: 1 },
  { label: "Ansichten", icon: "ansicht", level: 1 },
  { label: "Innenansichten", icon: "innen", level: 1 },
  { label: "Arbeitsblätter", icon: "blatt", level: 1 },
  { label: "Details", icon: "detail", level: 1 },
  { label: "3D-Dokumente", icon: "doc3d", level: 1 },
  { label: "3D", icon: "file3d", level: 1, open: true },
  { label: "Allgemeine Perspektive", icon: "file3d", level: 2, selected: true },
  { label: "Allgemeine Axonometrie", icon: "axono", level: 2 },
  { label: "00 Neue Animation", icon: "camera", level: 2 },
];

const INDENT = ["pl-0", "pl-7", "pl-14"];

function Tree() {
  return (
    <div className="flex shrink-0 bg-[#fafafa]">
      <ul className="h-[728px] min-w-0 flex-1 overflow-hidden border-r-2 border-b-2 border-[#e2e2e2] bg-white text-black">
        {TREE.map((row) => (
          <li key={row.label} className={clsx("flex h-12 items-center whitespace-nowrap", INDENT[row.level], row.selected && "bg-[#dadada] font-bold")}>
            <span className="flex w-[38px] shrink-0 items-center pl-2">
              {row.open && (
                <svg viewBox="0 0 16 10" className="h-2.5 w-4" fill="none" stroke="#858585" strokeWidth="3" aria-hidden="true">
                  <path d="M1 2L8 8L15 2" />
                </svg>
              )}
            </span>
            <span className="mr-2.5 flex w-9 shrink-0 justify-center text-[#263238]">
              <Icon name={row.icon} size={row.icon === "file3d" || row.icon === "axono" ? "size-8" : "size-9"} />
            </span>
            {row.label}
          </li>
        ))}
      </ul>
      <div className="w-[29px] pt-1.5 pl-1.5">
        <div className="h-[145px] w-4 rounded-full bg-[#c1c1c1]" />
      </div>
    </div>
  );
}

function GripLine({ className }) {
  return <div className={clsx("mx-auto h-0.5 w-[140px] shrink-0 bg-[#aaa]", className)} />;
}

const RANGE =
  "h-2 w-full appearance-none rounded-full bg-[#e2e2e2] [&::-webkit-slider-thumb]:h-8 [&::-webkit-slider-thumb]:w-4 [&::-webkit-slider-thumb]:appearance-none [&::-webkit-slider-thumb]:rounded-full [&::-webkit-slider-thumb]:bg-[#f8f8f8] [&::-webkit-slider-thumb]:shadow";

function PenSlider({ label, swatch, menu }) {
  return (
    <div className="shrink-0 text-[#808080]">
      <div className="flex h-[51px] items-center pl-[5px]">{label}</div>
      <div className="flex h-14 items-stretch gap-2 px-1.5">
        <button type="button" aria-label={`${label} Farbe`} className="flex w-14 items-center justify-between rounded-lg bg-[#f5f5f5] pl-3 shadow-sm">
          {swatch}
          <Chevron className="text-[#9c9c9c]" />
        </button>
        <div className="flex flex-1 flex-col justify-center pt-2.5">
          <input type="range" aria-label={label} defaultValue="100" disabled className={RANGE} />
          <div className="mt-2 flex justify-between px-0.5">
            {Array.from({ length: 11 }, (_, i) => (
              <span key={i} className="h-1.5 w-0.5 bg-[#a8a8a8]" />
            ))}
          </div>
        </div>
        {menu ? (
          <button type="button" aria-label={`${label} Optionen`} className="-ml-1 flex w-[26px] items-center justify-center rounded-lg bg-[#f5f5f5] shadow-sm">
            <Chevron className="text-[#9c9c9c]" />
          </button>
        ) : (
          <div className="-ml-1 w-[26px]" />
        )}
      </div>
    </div>
  );
}

function Navigator() {
  return (
    <aside className="flex w-[371px] shrink-0 flex-col border-l-[3px] border-[#e0e0e0] bg-[#ebebeb] text-[#222]">
      <GripLine className="mt-2" />
      <div className="flex h-[78px] shrink-0 items-center pr-1.5 pb-0.5 pl-1.5 text-[#263238]">
        <button type="button" aria-label="Projektmappe" className="flex h-[54px] w-14 items-center justify-center rounded-[10px] bg-[#c0bfc4]">
          <Icon name="house" />
        </button>
        <div className="ml-4 h-10 w-0.5 bg-[#d0d0d0]" />
        <div className="flex flex-1 gap-6 pl-5">
          <Icon name="viewmap" />
          <Icon name="layout" />
          <Icon name="publisher" size="size-[34px]" />
        </div>
        <button type="button" aria-label="Menü" className="flex h-[42px] w-[66px] items-center justify-between rounded-lg bg-white pl-[18px] shadow">
          <svg viewBox="0 0 24 18" className="h-[18px] w-6" stroke={INK} strokeWidth="2" aria-hidden="true">
            <path d="M0 1H24M0 9H24M0 17H24" />
          </svg>
          <Chevron className="text-[#222]" />
        </button>
      </div>
      <label className="mx-[5px] mb-[7px] flex h-[42px] shrink-0 items-center border border-b-2 border-[#cfcfcf] bg-white pr-[46px] pl-3">
        <Icon name="search" size="size-7" className="mr-[14px]" />
        <input type="text" aria-label="Suche" placeholder="Projektmappe durchsuchen" className="w-full min-w-0 bg-transparent outline-none placeholder:text-[#c0c0c0]" />
      </label>
      <Tree />
      <div className="flex h-7 shrink-0 items-center bg-[#fafafa] pl-1.5">
        <div className="h-4 w-[147px] rounded-full bg-[#c1c1c1]" />
      </div>

      <div className="flex h-[70px] shrink-0 items-center gap-8 pt-1 pl-[21px]">
        <button type="button" aria-label="Neu"><Icon name="add" size="size-7" className="text-[#9fb8f2]" /></button>
        <button type="button" aria-label="Eigenschaften"><Icon name="props" size="size-7" className="text-[#4a80f5]" /></button>
        <button type="button" aria-label="Löschen"><Icon name="cross" size="size-7" className="text-[#ef9d8b]" /></button>
      </div>
      <Section title="Beschreibungen" className="mx-1 h-11" />
      <div className="flex h-[52px] shrink-0 items-center justify-between pr-2 pl-2.5">
        <Icon name="file3d" size="size-[22px]" className="text-[#263238]" />
        Allgemeine Perspekt...
      </div>
      <button type="button" className="mx-1.5 h-[42px] shrink-0 rounded-lg bg-white shadow">Einstellungen...</button>
      <div className="mt-1.5 border-t border-[#e0e0e0]" />
      <GripLine className="mt-2" />

      <div className="mt-[11px] flex h-14 shrink-0 gap-1 px-1.5 text-[#8b9093]">
        <button type="button" aria-label="Transparentpause" className="flex w-14 items-center justify-center rounded-lg bg-[#f5f5f5] shadow-sm">
          <Icon name="sheets" />
        </button>
        <button type="button" className="flex flex-1 items-center rounded-lg bg-[#f5f5f5] pl-1.5 shadow-sm">
          <Icon name="plan" className="mr-[3px]" />
          <span className="flex-1 text-left text-[#bdbdbd]">0. EG</span>
          <Chevron />
        </button>
      </div>
      <div className="flex h-[78px] shrink-0 items-center border-b-2 border-[#d0d0d0] pr-[17px] pl-4 text-[#8b9093]">
        <Icon name="swap" className="mr-auto" />
        <div className="flex gap-[27px]">
          <Icon name="tmove" size="size-[33px]" />
          <Icon name="trotate" size="size-[33px]" />
          <Icon name="treset" size="size-[33px]" />
          <Icon name="refresh" size="size-[33px]" />
        </div>
      </div>
      <PenSlider label="Transparentpause:" menu swatch={<span className="h-6 w-6 bg-[#f1998d]" />} />
      <PenSlider
        label="Aktiv:"
        swatch={
          <svg viewBox="0 0 28 28" className="size-[26px]" stroke="#8b8f92" strokeWidth="2" aria-hidden="true">
            <path d="M14 14V2A12 12 0 0 1 24 20Z" fill="#f1998d" />
            <path d="M14 14L24 20A12 12 0 0 1 4 20Z" fill="#9db6f5" />
            <path d="M14 14L4 20A12 12 0 0 1 14 2Z" fill="#9fcfa2" />
          </svg>
        }
      />
      <div className="mt-3 flex flex-1 items-center justify-center gap-[27px] border-t-2 border-[#d0d0d0] pt-2.5 text-[#8b9093]">
        <Icon name="hand" size="size-[34px]" />
        <Icon name="overlap" size="size-[34px]" />
        <Icon name="mirror" size="size-[34px]" />
        <Icon name="hatch" size="size-[34px]" />
      </div>
    </aside>
  );
}

/* -------------------------------------------------------------------- page */

export default function App() {
  return (
    <div className="flex h-screen flex-col overflow-hidden bg-white px-28 pt-[75px] pb-[148px] font-['Inter','Liberation_Sans',sans-serif] text-[22px] leading-7">
      <div className="flex min-h-0 flex-1 flex-col overflow-hidden rounded-[22px] bg-[#e5e5e5] shadow-[0_0_2px_1px_rgba(0,0,0,0.35),0_36px_80px_rgba(0,0,0,0.42)]">
        <header className="relative flex h-[57px] shrink-0 items-center justify-center border-b-2 border-[#c6c9cb] bg-[#f3f5f7]">
          <div className="absolute left-4 flex gap-4">
            <button type="button" aria-label="Schließen" className="size-6 rounded-full border border-[#d8574c] bg-[#ed6b60]" />
            <button type="button" aria-label="Minimieren" className="size-6 rounded-full border border-[#dda63d] bg-[#f5bf4f]" />
            <button type="button" aria-label="Zoomen" className="size-6 rounded-full border border-[#55a943] bg-[#62c655]" />
          </div>
          <svg viewBox="0 0 24 30" className="mr-3 h-[30px] w-6" fill="#fcfcfc" stroke="#cfcfcf" aria-hidden="true">
            <path d="M1 1H16L23 9V29H1Z" />
            <path d="M3 9Q6 0 10 7" fill="none" stroke="#3454b4" strokeWidth="2" />
            <path d="M6 13H18V26H6ZM6 19H18M12 13V16M12 22V26" strokeWidth="2" />
          </svg>
          <h1 className="text-[26px] font-bold text-[#484848]">Raum-prüfen.pln</h1>
        </header>
        <div className="flex h-[72px] shrink-0"><Toolbar items={MAIN_TOOLBAR} /></div>
        <div className="flex h-[76px] shrink-0 pt-px pb-0.5"><Toolbar items={EDIT_TOOLBAR} /></div>
        <InfoBox />
        <div className="mt-0.5 flex min-h-0 flex-1">
          <Toolbox />
          <Viewport />
          <Navigator />
        </div>
        <footer className="flex h-[49px] shrink-0 items-center border-t border-[#e0e0e0] bg-[#ebebeb] pr-6 pb-1.5 pl-[13px] text-[#222]">
          <p className="flex-1">
            Klicken Sie mit dem Cursor auf ein Element oder ziehen Sie einen Auswahlbereich auf. Drücken Sie für Morphbearbeitung Strg/Ctrl+Umsch, um zwischen Element-/Unterelement-Auswahl zu wechseln.
          </p>
          <Icon name="windows" size="size-8" className="text-[#263238]" />
          <div className="mx-5 h-[30px] w-0.5 bg-[#8f9698]" />
          <a href="#graphisoft-id" className="font-['Lato',sans-serif] text-[26px] font-medium text-[#263238]">
            GRAPHISOFT <span className="font-light">ID</span>
          </a>
        </footer>
      </div>
    </div>
  );
}
